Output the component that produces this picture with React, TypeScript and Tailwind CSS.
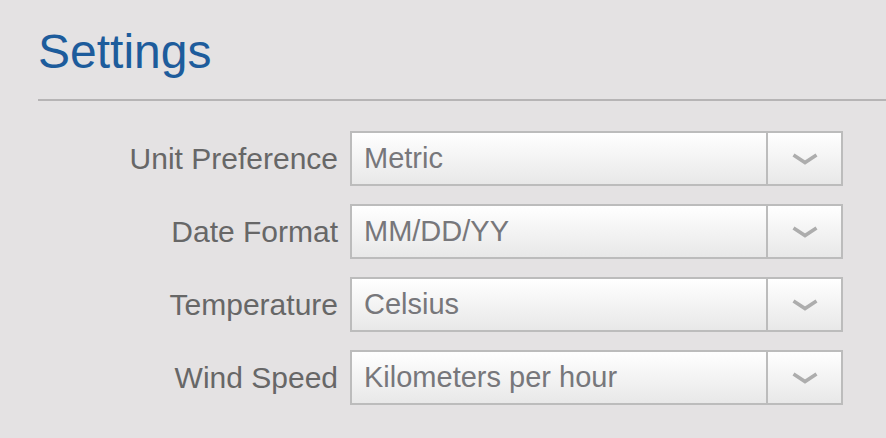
import React from "react";

const rows = [
  { label: "Unit Preference", value: "Metric" },
  { label: "Date Format", value: "MM/DD/YY" },
  { label: "Temperature", value: "Celsius" },
  { label: "Wind Speed", value: "Kilometers per hour" },
];

function Chevron() {
  return (
    <svg width="28" height="12" viewBox="0 0 28 12" fill="none">
      <path d="M2.5 2 L14 9.5 L25.5 2" stroke="#adadad" strokeWidth="3.6" strokeLinecap="butt" strokeLinejoin="miter" />
    </svg>
  );
}

export default function App() {
  return (
    <div
      className="w-[886px] h-[438px] overflow-hidden bg-[#e4e2e3]"
      style={{ fontFamily: '"Liberation Sans", Arial, Helvetica, sans-serif' }}
    >
      <div className="pt-[28px] pl-[38px]">
        <h1 className="text-[48px] leading-[48px] text-[#1d5c9c] font-normal">Settings</h1>
        <div className="mt-[23px] h-[2px] bg-[#b6b4b5]" />
      </div>
      <div className="mt-[30px] flex flex-col gap-[18px]">
        {rows.map((r) => (
          <div key={r.label} className="flex items-center">
            <div className="w-[338px] text-right text-[30px] text-[#676767]">{r.label}</div>
            <div className="ml-[12px] w-[493px] h-[55px] flex border-2 border-[#bcbcbc] bg-gradient-to-b from-[#ffffff] to-[#e8e8e8]">
              <div className="flex-1 flex items-center pl-[12px] text-[29px] text-[#77777b] border-r-2 border-[#bcbcbc]">
                {r.value}
              </div>
              <div className="w-[73px] flex items-center justify-center">
                <Chevron />
              </div>
            </div>
          </div>
        ))}
      </div>
    </div>
  );
}
